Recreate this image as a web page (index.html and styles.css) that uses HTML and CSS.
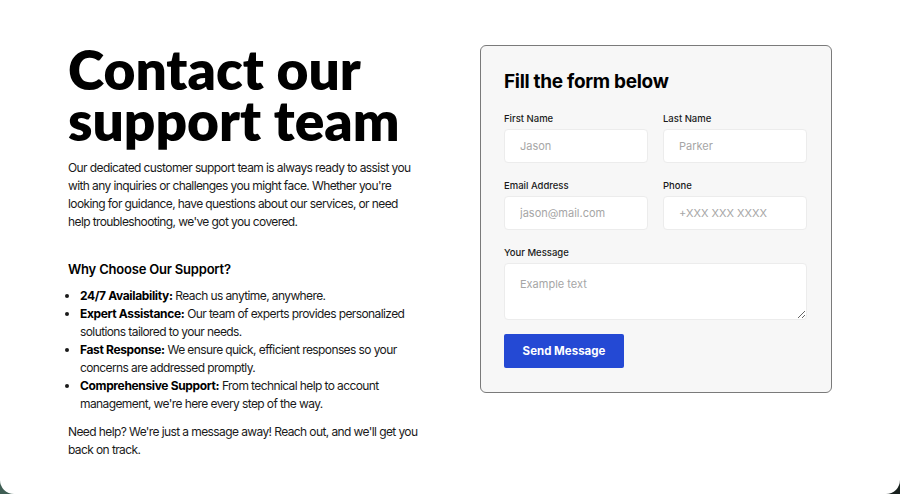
FILE: index.html
```html
<!DOCTYPE html>
<html lang="en">
<head>
<meta charset="utf-8">
<title>Contact our support team</title>
<link rel="stylesheet" href="styles.css">
</head>
<body>
<main class="page">
  <div class="wrap">
    <section class="intro">
      <h1 class="title">Contact our support team</h1>
      <p class="lead">Our dedicated customer support team is always ready to assist you with any inquiries or challenges you might face. Whether you're looking for guidance, have questions about our services, or need help troubleshooting, we've got you covered.</p>
      <h2 class="why">Why Choose Our Support?</h2>
      <ul class="list">
        <li><strong>24/7 Availability:</strong> Reach us anytime, anywhere.</li>
        <li><strong>Expert Assistance:</strong> Our team of experts provides personalized solutions tailored to your needs.</li>
        <li><strong>Fast Response:</strong> We ensure quick, efficient responses so your concerns are addressed promptly.</li>
        <li><strong>Comprehensive Support:</strong> From technical help to account management, we're here every step of the way.</li>
      </ul>
      <p class="outro">Need help? We're just a message away! Reach out, and we'll get you back on track.</p>
    </section>
    <form class="card">
      <h3 class="card-title">Fill the form below</h3>
      <div class="grid">
        <label class="field"><span class="lbl">First Name</span><input class="inp" type="text" placeholder="Jason"></label>
        <label class="field"><span class="lbl">Last Name</span><input class="inp" type="text" placeholder="Parker"></label>
        <label class="field"><span class="lbl">Email Address</span><input class="inp" type="email" placeholder="jason@mail.com"></label>
        <label class="field"><span class="lbl">Phone</span><input class="inp" type="tel" placeholder="+XXX XXX XXXX"></label>
        <label class="field full"><span class="lbl">Your Message</span><textarea class="inp area" placeholder="Example text"></textarea></label>
      </div>
      <button class="btn" type="button">Send Message</button>
    </form>
  </div>
</main>
</body>
</html>
```
FILE: styles.css
```css
* { box-sizing: border-box; }
html, body { margin: 0; padding: 0; }
body {
  width: 900px;
  height: 494px;
  overflow: hidden;
  background: linear-gradient(90deg, #3f5e54 0%, #24352f 60%, #18211e 100%);
  font-family: Inter, "Liberation Sans", sans-serif;
  color: #111;
}
.page {
  height: 494px;
  background: #fff;
  border-radius: 0 0 14px 14px;
  padding: 44px 68px 0 68px;
}
.wrap {
  display: flex;
  justify-content: space-between;
  align-items: flex-start;
}
.intro { width: 351px; }
.title {
  margin: 0;
  font-family: Lato, Inter, sans-serif;
  font-weight: 800;
  font-size: 55px;
  line-height: 51px;
  color: #000;
}
.lead, .list, .outro {
  font-size: 12px;
  line-height: 18px;
  letter-spacing: -0.6px;
  color: #1a1a1a;
}
.lead { margin: 13px 0 0; }
.why {
  margin: 29px 0 0;
  font-size: 13px;
  font-weight: 600;
  line-height: 18px;
  letter-spacing: -0.2px;
  color: #000;
}
.list {
  margin: 9px 0 0;
  padding-left: 12px;
}
.list strong { font-weight: 700; color: #000; letter-spacing: -0.35px; }
.outro { margin: 10px 0 0; }
.card {
  width: 352px;
  margin: 1px 0 0;
  background: #f7f7f7;
  border: 1px solid #7a7a7a;
  border-radius: 6px;
  padding: 24px 24px 24px 23px;
}
.card-title {
  margin: 0;
  font-size: 19px;
  font-weight: 700;
  line-height: 24px;
  letter-spacing: -0.3px;
  color: #000;
}
.grid {
  margin-top: 19px;
  display: grid;
  grid-template-columns: 144px 144px;
  column-gap: 15px;
  row-gap: 17px;
}
.field { display: flex; flex-direction: column; }
.full { grid-column: 1 / 3; }
.lbl {
  font-size: 9.5px;
  line-height: 12px;
  font-weight: 500;
  color: #1a1a1a;
  margin-bottom: 4px;
}
.inp {
  height: 34px;
  border: 1px solid #ececec;
  border-radius: 4px;
  background: #fff;
  padding: 0 15px;
  font-family: Inter, "Liberation Sans", sans-serif;
  font-size: 11px;
  color: #333;
  outline: none;
}
.inp::placeholder { color: #a6a6a6; }
.area {
  height: 57px;
  padding: 13px 15px;
  resize: vertical;
}
.btn {
  margin-top: 14px;
  width: 120px;
  height: 34px;
  border: none;
  border-radius: 2px;
  background: #2449d4;
  color: #fff;
  font-family: Inter, "Liberation Sans", sans-serif;
  font-size: 11.5px;
  font-weight: 700;
  cursor: pointer;
}
```
